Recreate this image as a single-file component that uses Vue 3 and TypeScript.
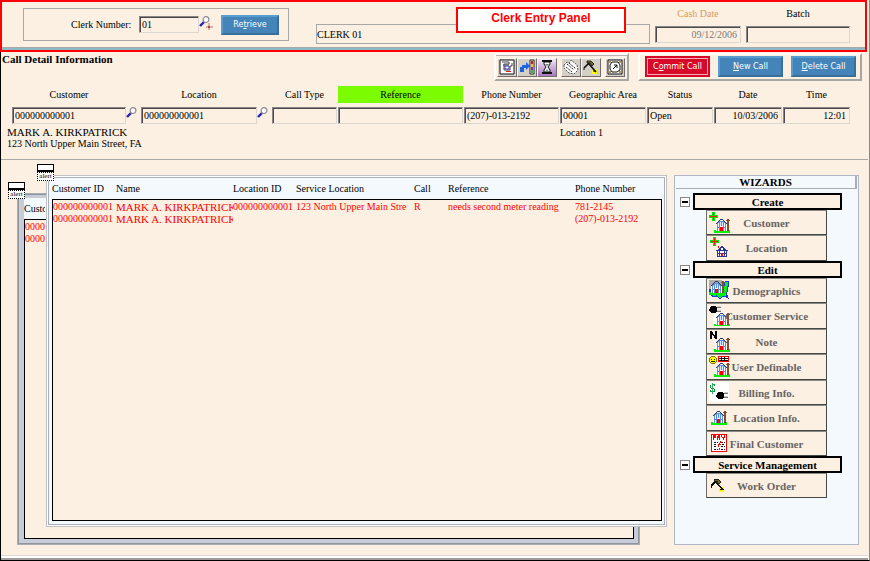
<script setup lang="ts">
import { ref } from 'vue'

interface Wizard { label: string; icon: string }
interface Section { title: string; open: boolean; items: Wizard[] }
interface Call {
  customer: string; name: string; location: string; service: string
  call: string; reference: string; phone: string
}

const sections = ref<Section[]>([
  { title: 'Create', open: true, items: [
    { label: 'Customer', icon: 'add-customer' },
    { label: 'Location', icon: 'add-location' },
  ] },
  { title: 'Edit', open: true, items: [
    { label: 'Demographics', icon: 'demographics' },
    { label: 'Customer Service', icon: 'service' },
    { label: 'Note', icon: 'note' },
    { label: 'User Definable', icon: 'user' },
    { label: 'Billing Info.', icon: 'billing' },
    { label: 'Location Info.', icon: 'location-info' },
    { label: 'Final Customer', icon: 'final' },
  ] },
  { title: 'Service Management', open: true, items: [
    { label: 'Work Order', icon: 'work' },
  ] },
])

const headings = ['Customer ID', 'Name', 'Location ID', 'Service Location', 'Call', 'Reference', 'Phone Number']

const calls: Call[] = [
  { customer: '000000000001', name: 'MARK A. KIRKPATRICK', location: '000000000001', service: '123 North Upper Main Stre', call: 'R', reference: 'needs second meter reading', phone: '781-2145' },
  { customer: '000000000001', name: 'MARK A. KIRKPATRICK', location: '', service: '', call: '', reference: '', phone: '(207)-013-2192' },
]

const clerk = ref('01')
const clerkName = ref('CLERK 01')
const cashDate = ref('09/12/2006')
const batch = ref('')
const customer = ref('000000000001')
const location = ref('000000000001')
const callType = ref('')
const reference = ref('')
const phone = ref('(207)-013-2192')
const area = ref('00001')
const status = ref('Open')
const date = ref('10/03/2006')
const time = ref('12:01')
</script>

<template>
  <div class="app">
    <svg class="defs" aria-hidden="true">
      <symbol id="house" viewBox="0 0 16 15">
        <path d="M0 12h16v3H0z" fill="#00f000" />
        <path d="M2 6h11v7H2z" fill="#fff" />
        <path d="M3 5h1v8H3zM11 5h1v8h-1zM4 3h7v2H4zM5 5h1v8H5zM9 5h1v8H9z" fill="#5890dc" />
        <path d="M6 4h3v4H6z" fill="#d8e8ff" />
        <path d="M7 3h1v5H7zM3 9h9v1H3z" fill="#5890dc" />
        <path d="M6 1h3v1H6zM9 2h1v1H9zM10 3h1v1h-1zM11 4h1v1h-1zM12 5h1v1h-1zM5 2h1v1H5zM4 3h1v1H4zM3 4h1v1H3zM2 5h1v1H2z" fill="#283870" />
        <path d="M6 9h3v4H6z" fill="#f00" />
        <path d="M13 1h2v12h-2zM12 2h4v1h-4z" fill="#84502c" />
      </symbol>
      <symbol id="plug" viewBox="0 0 13 9">
        <path d="M2 1h5v7H2zM1 2h7v5H1zM0 4h1v2H0z" fill="#000" />
        <path d="M8 2h4v1H8zM8 6h4v1H8z" fill="#777" />
        <path d="M8 1h4v1H8zM8 5h4v1H8z" fill="#ccc" />
      </symbol>
      <symbol id="plus" viewBox="0 0 9 9">
        <path d="M3 0h3v3h3v3H6v3H3V6H0V3h3z" fill="#00e800" />
        <path d="M4 1h1v7H4zM1 4h7v1H1z" fill="#f02000" />
      </symbol>
      <symbol id="lens" viewBox="0 0 11 11">
        <path d="M1 10l4-4" stroke="#2420b8" stroke-width="2.4" />
        <circle cx="7" cy="3.6" r="2.9" fill="#fff" stroke="#8c8894" stroke-width="1.2" />
      </symbol>
      <symbol id="hammer" viewBox="0 0 16 16">
        <path d="M9 11h2v-1h3v5h-5z" fill="#ff0" />
        <path d="M1 9l6-6M6 5l7 8" stroke="#111" stroke-width="1.6" fill="none" />
        <path d="M4 2h4l3 3-2 2-2-3H4z" fill="#6c6a28" stroke="#111" stroke-width=".8" />
        <path d="M1 9v2M10 12h3" stroke="#111" />
      </symbol>
    </svg>

    <header class="clerk-bar">
      <form class="clerk-form" @submit.prevent>
        <label for="clerk">Clerk Number:</label>
        <input id="clerk" v-model="clerk" class="box" />
        <button type="button" class="lookup wide" aria-label="Find clerk">
          <svg viewBox="0 0 14 14" width="14" height="14">
            <use href="#lens" width="11" height="11" />
            <path d="M10 7v7M7 11h7" stroke="#c87070" />
            <path d="M9 10h2v2H9z" fill="#a04848" />
          </svg>
        </button>
        <button type="submit" class="action">Re<u>t</u>rieve</button>
      </form>
      <input v-model="clerkName" class="clerk-name" aria-label="Clerk name" readonly />
      <div class="stack cash">
        <label for="cash">Cash Date</label>
        <input id="cash" v-model="cashDate" class="box right" readonly />
      </div>
      <div class="stack batch">
        <label for="batch">Batch</label>
        <input id="batch" v-model="batch" class="box" />
      </div>
      <div class="callout">Clerk Entry Panel</div>
    </header>

    <section class="detail">
      <div class="title-row">
        <h1>Call Detail Information</h1>
        <div class="panel tools">
          <button type="button" aria-label="Call form">
            <svg viewBox="0 0 16 16"><path d="M1 1h14v14H1z" fill="#fff" stroke="#111" /><path d="M3 3h7v2H5v6h6V7h2V4M4 6h6" fill="none" stroke="#444" /><path d="M6 7h4v3H6z" fill="#fff" stroke="#3838c8" /><path d="M7 12h5v1H7z" fill="#e02020" /></svg>
          </button>
          <button type="button" aria-label="Transfer">
            <svg viewBox="0 0 16 16"><path d="M1 13V8h2V6h4V3l4 4-4 4V9H5v4z" fill="#1c64e0" /><path d="M11 1h4v14h-4z" fill="#fff" stroke="#222" /><path d="M12 2h2v3h-2z" fill="#c02020" /><path d="M12 5h2v3h-2z" fill="#f0c040" /><path d="M12 8h2v3h-2z" fill="#8030c0" /><path d="M12 11h2v3h-2z" fill="#40b040" /></svg>
          </button>
          <button type="button" class="purple" aria-label="History">
            <svg viewBox="0 0 16 16"><path d="M3 2h10M3 14h10" stroke="#111" stroke-width="2" /><path d="M5 3v2l2 3-2 3v2h6v-2L9 8l2-3V3z" fill="#fff" stroke="#111" /><path d="M6 5h4L8 7zM6 13l2-3 2 3z" fill="#777" /></svg>
          </button>
          <button type="button" class="gap" aria-label="Notes">
            <svg viewBox="0 0 16 16"><path d="M1 6l3-3 2 1 2-3 6 5 1 5-4 4-5-1-5-5z" fill="#fff" stroke="#555" stroke-dasharray="2 1" /><path d="M4 5l7 6M6 4l7 6M3 8l6 5" stroke="#222" stroke-dasharray="2 1" /></svg>
          </button>
          <button type="button" aria-label="Work order">
            <svg viewBox="0 0 16 16"><use href="#hammer" width="16" height="16" /></svg>
          </button>
          <button type="button" class="gap" aria-label="Map">
            <svg viewBox="0 0 16 16"><path d="M1 1h14v14H1z" fill="#fff" stroke="#111" /><path d="M2 2h2v2H2zM12 2h2v2h-2zM2 12h2v2H2zM12 12h2v2h-2z" fill="#b89850" /><path d="M5 3h6l2 3v5l-3 2H5l-2-3V6zM6 10l4-4M7 6h3v3" fill="none" stroke="#111" /></svg>
          </button>
        </div>
        <div class="panel actions">
          <button type="button" class="action danger"><span>C<u>o</u>mmit Call</span></button>
          <button type="button" class="action"><u>N</u>ew Call</button>
          <button type="button" class="action"><u>D</u>elete Call</button>
        </div>
      </div>

      <div class="fields">
        <div class="field has-lookup">
          <label for="customer">Customer</label>
          <div class="line">
            <input id="customer" v-model="customer" class="box" />
            <button type="button" class="lookup" aria-label="Find customer"><svg width="11" height="11"><use href="#lens" /></svg></button>
          </div>
        </div>
        <div class="field has-lookup">
          <label for="location">Location</label>
          <div class="line">
            <input id="location" v-model="location" class="box" />
            <button type="button" class="lookup" aria-label="Find location"><svg width="11" height="11"><use href="#lens" /></svg></button>
          </div>
        </div>
        <div class="field">
          <label for="type">Call Type</label>
          <input id="type" v-model="callType" class="box" />
        </div>
        <div class="field">
          <label for="reference" class="marked">Reference</label>
          <input id="reference" v-model="reference" class="box" />
        </div>
        <div class="field">
          <label for="phone">Phone Number</label>
          <input id="phone" v-model="phone" class="box" />
        </div>
        <div class="field">
          <label for="area">Geographic Area</label>
          <input id="area" v-model="area" class="box" />
        </div>
        <div class="field">
          <label for="status">Status</label>
          <input id="status" v-model="status" class="box" />
        </div>
        <div class="field">
          <label for="date">Date</label>
          <input id="date" v-model="date" class="box right" />
        </div>
        <div class="field">
          <label for="time">Time</label>
          <input id="time" v-model="time" class="box right" />
        </div>
        <div class="caller">
          <p class="person">MARK A. KIRKPATRICK</p>
          <p>123 North Upper Main Street, FA</p>
        </div>
        <div class="place"><p>Location 1</p></div>
      </div>
    </section>

    <main class="work">
      <div class="desk">
        <section class="window back" aria-label="Background call list">
          <table>
            <colgroup><col class="sliver" /><col /></colgroup>
            <thead><tr><th scope="col">Customer ID</th><th></th></tr></thead>
            <tbody>
              <tr v-for="(c, i) in calls" :key="i"><td>{{ c.customer }}</td><td></td></tr>
              <tr class="rest"><td colspan="2"></td></tr>
            </tbody>
          </table>
        </section>
        <section class="window front" aria-label="Call list">
          <table>
            <colgroup>
              <col class="c1" /><col class="c2" /><col class="c3" /><col class="c4" /><col class="c5" /><col class="c6" /><col />
            </colgroup>
            <thead>
              <tr><th v-for="h in headings" :key="h" scope="col">{{ h }}</th></tr>
            </thead>
            <tbody>
              <tr v-for="(c, i) in calls" :key="i">
                <td>{{ c.customer }}</td>
                <td class="person">{{ c.name }}</td>
                <td>{{ c.location }}</td>
                <td>{{ c.service }}</td>
                <td>{{ c.call }}</td>
                <td>{{ c.reference }}</td>
                <td>{{ c.phone }}</td>
              </tr>
              <tr class="rest"><td colspan="7"></td></tr>
            </tbody>
          </table>
        </section>
        <button type="button" class="tab tab-back"><i></i><span>alert</span></button>
        <button type="button" class="tab tab-front"><i></i><span>alert</span></button>
      </div>

      <aside class="wizards">
        <h2>WIZARDS</h2>
        <section v-for="s in sections" :key="s.title" class="group">
          <div class="group-head">
            <button type="button" class="toggle" :aria-label="'Toggle ' + s.title" :aria-expanded="s.open" @click="s.open = !s.open"></button>
            <h3>{{ s.title }}</h3>
          </div>
          <div v-show="s.open" class="items">
            <button v-for="w in s.items" :key="w.label" type="button" class="item">
              <svg viewBox="0 0 22 22" width="22" height="22" aria-hidden="true">
                <template v-if="w.icon === 'add-customer'">
                  <use href="#house" x="6" y="7" width="16" height="15" />
                  <use href="#plus" x="1" y="1" width="9" height="9" />
                </template>
                <template v-else-if="w.icon === 'add-location'">
                  <path d="M9 14h10v7H9z" fill="#fff" />
                  <path d="M9 14h1v7H9zM18 14h1v7h-1zM9 20h10v1H9zM9 17h10v1H9zM16 14h1v7h-1zM11 14h1v6h-1z" fill="#283898" />
                  <path d="M13 10h2v1h1v1h1v1h1v1h2v1H8v-1h2v-1h1v-1h1v-1h1z" fill="#283898" />
                  <path d="M13 12h2v2h-2z" fill="#fff" />
                  <path d="M13 17h2v3h-2zM10 10h1v2h-1z" fill="#f00" />
                  <use href="#plus" x="2" y="1" width="9" height="9" />
                </template>
                <template v-else-if="w.icon === 'demographics'">
                  <path d="M1 1h13v11H1z" fill="#b0acac" />
                  <path d="M2 11l11-1 3-3 1-4 3-1 1 4-2 3 1 3-2 2 2 5-3-2-3 1-2 2-3-3-4 1-3-4z" fill="#00f028" stroke="#1838e0" stroke-width="1.2" />
                  <use href="#house" x="1" y="1" width="16" height="15" />
                </template>
                <template v-else-if="w.icon === 'service'">
                  <path d="M6 8h14v13H6z" fill="#fff" />
                  <use href="#house" x="6" y="8" width="16" height="15" />
                  <use href="#plug" x="1" y="1" width="13" height="9" />
                </template>
                <template v-else-if="w.icon === 'note'">
                  <use href="#house" x="6" y="7" width="16" height="15" />
                  <path d="M2 1h2v1h1v2h1v1h1V1h2v8H7V8H6V6H5V5H4v4H2z" fill="#000" />
                </template>
                <template v-else-if="w.icon === 'user'">
                  <use href="#house" x="6" y="7" width="16" height="15" />
                  <circle cx="5" cy="5" r="3.6" fill="#ff0" stroke="#8c7400" />
                  <path d="M3 4h1v1H3zM6 4h1v1H6zM3 6h4v1H3z" fill="#222" />
                  <path d="M10 1h11v6H10z" fill="#f00" />
                  <path d="M11 2h9v4h-9z" fill="#fff" />
                  <path d="M11 3h9v1h-9zM11 5h9v1h-9zM13 2h1v4h-1zM16 2h1v4h-1z" fill="#111" />
                </template>
                <template v-else-if="w.icon === 'billing'">
                  <path d="M1 1h20v20H1z" fill="#fff" />
                  <path d="M4 2h1v1h2v2H6V4H3v3h3v1h1v3H5v2H4v-2H2V9h1v1h3V8H3V7H2V4h2z" fill="#089838" />
                  <path d="M4 2h1v11H4z" fill="#30b060" />
                  <use href="#plug" x="8" y="10" width="13" height="9" />
                </template>
                <template v-else-if="w.icon === 'location-info'">
                  <use href="#house" x="3" y="4" width="16" height="15" />
                </template>
                <template v-else-if="w.icon === 'final'">
                  <path d="M3 2h16v18H3z" fill="#f00" />
                  <path d="M4 3h14v16H4z" fill="#fff" />
                  <path d="M5 3h3v3H6v2H5zM9 4h1V3h2v5h-1V6h-1v2H9zM13 3h1v2h2V3h1v3h-1v2h-1V6h-1V5h-1zM12 9h1v2h-1v1h1v1h-2v2h-1v-3h1v-1h1zM11 16h1v2h-1z" fill="#f00" />
                  <path d="M6 10h4M13 10h4M6 12h3M14 12h3M6 14h3M13 14h4M6 17h4M13 17h4" stroke="#111" stroke-dasharray="2 1" />
                </template>
                <template v-else>
                  <use href="#hammer" x="2" y="3" width="16" height="16" />
                </template>
              </svg>
              <span>{{ w.label }}</span>
            </button>
          </div>
        </section>
      </aside>
    </main>
  </div>
</template>

<style>
body { margin: 0; background: #fbf0e2; }
</style>

<style scoped>
* { box-sizing: border-box; }
.app {
  display: flex; flex-direction: column;
  min-height: 100vh;
  padding-right: 1px;
  border-left: 1px solid #000;
  border-right: 1px solid #8c8888;
  border-bottom: 1px solid #000;
  background: #fbf0e2;
  color: #000;
  font: 10px/12px "Liberation Serif", serif;
}
.defs { position: absolute; width: 0; height: 0; }
h1, h2, h3, p { margin: 0; }
h1, h2, h3, .person { font-size: 11px; }
button, input { font: inherit; color: inherit; margin: 0; padding: 0; border-radius: 0; }
input { min-width: 0; background: #fbf0e2; }
button { cursor: pointer; }
.box {
  display: block; width: 100%; height: 17px; padding: 0 3px 0 2px;
  border: 1px solid; border-color: #8a8688 #dcd8d0 #dcd8d0 #8a8688;
  box-shadow: inset 1px 1px 0 #4c484c;
}
.right { text-align: right; }

.clerk-bar {
  position: relative;
  display: flex; align-items: flex-start;
  height: 52px; margin: 0 1px 0 -1px; padding: 6px 15px 0 21px;
  border: 2px solid #f00;
  box-shadow: inset 0 -2px 0 #8cb8c8, inset 0 -3px 0 #a8a8a8;
}
.clerk-form {
  display: flex; align-items: center;
  width: 266px; height: 33px; margin-right: 27px; padding-left: 47px;
  border: 1px solid #a8a8a8;
}
.clerk-form label { flex: 1; }
.clerk-form .box { width: 60px; }
.clerk-form .action { width: 58px; height: 20px; margin: 0 9px 0 8px; }
.clerk-name { flex: 1; height: 20px; margin: 16px 5px 0 0; padding: 0; border: 1px solid #a8a8a8; }
.stack label { display: block; margin-bottom: 6px; text-align: center; }
.cash { width: 86px; margin-right: 5px; color: #dc9c58; }
.cash .box { color: #7c7878; }
.batch { width: 104px; }
.callout {
  position: absolute; left: 454px; top: 5px;
  width: 170px; height: 26px;
  border: 2px solid #f00; background: #fff; color: #f00;
  font: bold 12px/18px "Liberation Sans", sans-serif; text-align: center;
}
.lookup { flex: none; align-self: flex-start; width: 11px; height: 11px; border: 0; background: none; }
.lookup svg { display: block; }
.lookup.wide { width: 14px; height: 14px; margin-top: 7px; }
.action {
  border: 2px solid; border-color: #589cd0 #38709c #38709c #589cd0;
  background: #4484b8; color: #fff;
  font: 8px/12px "DejaVu Sans", sans-serif; text-align: center;
}

.detail { padding-bottom: 10px; border-bottom: 1px solid #a8a8a8; }
.title-row { display: flex; align-items: flex-start; height: 34px; padding: 1px 6px 0 1px; }
.title-row h1 { flex: 1; line-height: 13px; }
.panel {
  display: flex; height: 28px; padding: 1px;
  border: 2px solid; border-color: #fffcf8 #a8a8a0 #a8a8a0 #fffcf8;
}
.tools { margin-right: 9px; padding: 3px 2px 2px 1px; box-shadow: inset 0 1px 0 #b8b4b0; }
.tools button {
  display: grid; place-items: start; width: 20px; height: 19px; padding-left: 1px;
  border: 1px solid; border-color: #f8f8f8 #706c6c #706c6c #f8f8f8;
  background: #d4d0c8;
}
.tools svg { width: 16px; height: 16px; }
.tools .purple { background: linear-gradient(#f0e8f4, #a878c0); }
.tools .gap { margin-left: 4px; }
.actions { gap: 8px; padding: 1px 4px 1px 5px; }
.actions .action { width: 65px; height: 21px; }
.actions .danger { padding: 0; border: 2px solid #d80828; background: #d80828; }
.danger span { display: block; border: 1px solid #f4b0b8; line-height: 15px; }

.fields {
  display: grid; padding: 0 17px 0 11px;
  grid-template-columns: 129fr 131fr 66fr 126fr 96fr 87fr 67fr 69fr 68fr;
}
.field { min-width: 0; padding-right: 1px; }
.field label { display: block; margin-bottom: 4px; line-height: 17px; text-align: center; white-space: nowrap; }
.has-lookup { padding-right: 4px; }
.has-lookup label { padding-right: 11px; }
.line { display: flex; }
.line .box { flex: 1; }
.marked { background: #7cfc00; }
.caller, .place { padding-top: 3px; line-height: 11px; white-space: nowrap; }
.caller { grid-column: 1 / 6; margin-left: -5px; }
.place { grid-column: 6 / 10; }

.work {
  flex: 1; display: flex; padding: 15px 9px 13px 0;
  border-bottom: 2px solid #a09c9c;
  box-shadow: inset 0 -2px 0 #fff, inset 0 -3px 0 #e0d8d4;
}
.desk { flex: 1; position: relative; min-width: 0; margin-right: 7px; }
.window { position: absolute; border: 1px solid #a8acb4; }
.front {
  left: 45px; right: 0; top: 0; bottom: 18px; padding: 2px 4px 5px 5px;
  border-color: #c0c0c4; background: #f4f9fd;
  box-shadow: inset 0 0 0 1px #fff, inset 0 0 0 2px #a8b0bc;
}
.back {
  left: 16px; right: 27px; top: 18px; bottom: 0; padding: 4px 5px 5px 6px;
  background: #c8ccd8;
  box-shadow: inset 0 0 0 1px #90949c;
}
table { width: 100%; height: 100%; table-layout: fixed; border-spacing: 0; }
th, td { overflow: hidden; padding: 0; font-weight: normal; text-align: left; white-space: nowrap; }
th { height: 21px; background: #f4f9fd; }
td { height: 12px; background: #fbf0e2; color: #f00; }
tbody tr:first-child td { height: 14px; padding-top: 1px; border-top: 1px solid #000; }
td:first-child { border-left: 1px solid #000; }
td:last-child { border-right: 1px solid #000; }
.rest td { height: auto; border-bottom: 1px solid #000; }
.sliver { width: 21px; }
.c1 { width: 64px; }
.c2 { width: 117px; }
.c3 { width: 63px; }
.c4 { width: 118px; }
.c5 { width: 34px; }
.c6 { width: 127px; }
.tab { position: absolute; width: 17px; height: 17px; border: 0; background: #fff; }
.tab i { display: block; height: 8px; border: 1px solid #000; border-bottom-width: 2px; }
.tab span { display: block; height: 9px; overflow: hidden; border: 1px dotted #000; font-size: 7px; line-height: 6px; }
.tab-back { left: 7px; top: 7px; }
.tab-front { left: 36px; top: -11px; }

.wizards {
  width: 185px; border: 1px solid #b0b8c8; background: #f4f9fd; padding: 0 1px 0 1px;
}
.wizards h2 {
  height: 13px; margin-bottom: 4px; line-height: 13px; text-align: center;
  border-right: 2px solid #a8acb4; border-bottom: 1px solid #a8acb4;
}
.group-head { display: flex; align-items: center; padding: 0 15px 0 4px; gap: 3px; }
.toggle { display: grid; place-items: center; width: 10px; height: 10px; border: 1px solid #888; background: #fff; }
.toggle::before { content: ""; width: 6px; height: 2px; background: #000; }
.group-head h3 {
  flex: 1; height: 17px; border: 2px solid #000; background: #fbf0e2;
  line-height: 14px; text-align: center;
}
.items { margin: 0 30px; }
.item {
  display: grid; grid-template-columns: 100%; align-items: center;
  width: 100%; height: 25px;
  border: 1px solid; border-color: #8c8884 #444844 #444844 #706c68;
  background: #fbf0e2; color: #686464; font-size: 11px; font-weight: bold;
}
.item:nth-child(even) { height: 26px; }
.item svg { grid-area: 1 / 1; align-self: start; margin-left: 1px; shape-rendering: crispEdges; }
.item span { grid-area: 1 / 1; text-align: center; white-space: nowrap; }
</style>
